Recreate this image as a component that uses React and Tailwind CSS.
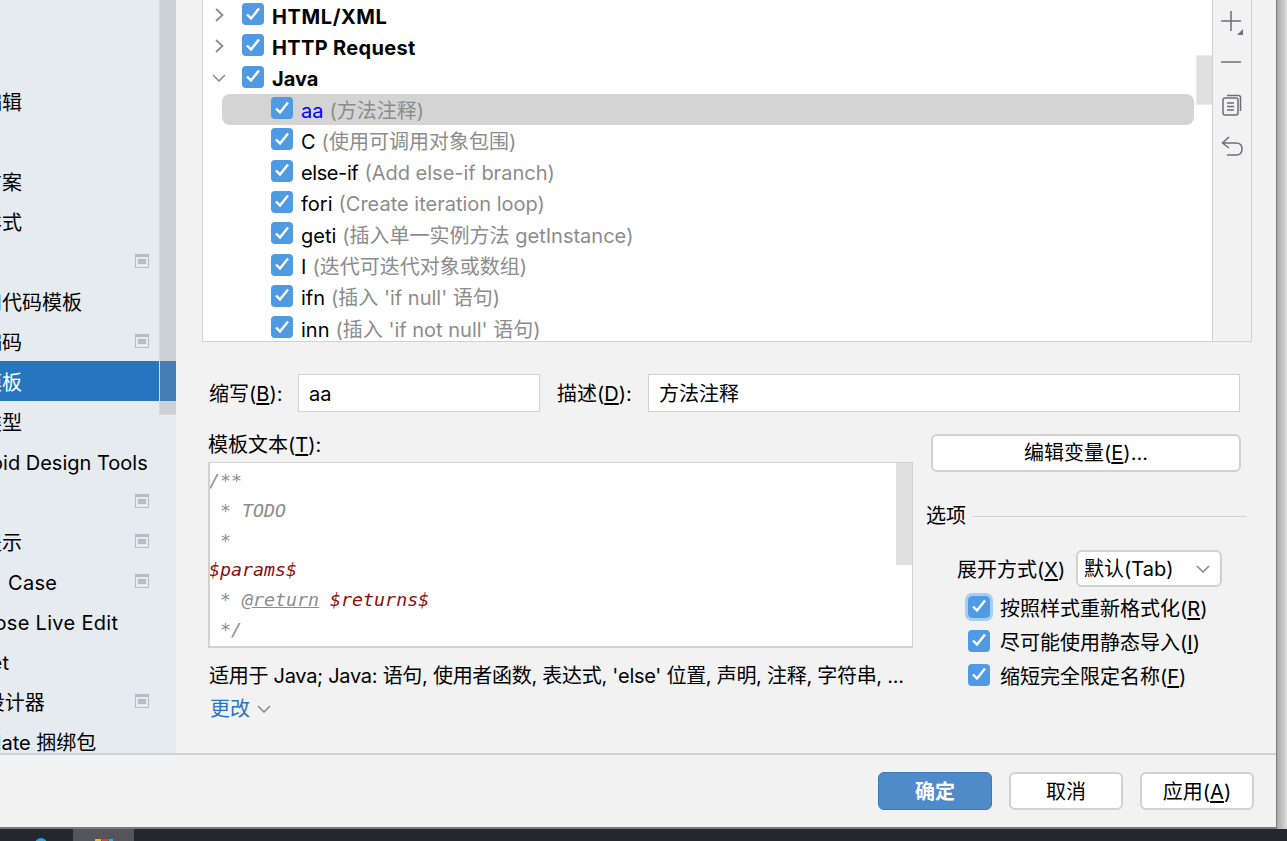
const sans = 'font-["Inter","Noto_Sans_CJK_SC",sans-serif]';

const navRows = [
  { text: '' },
  { text: '' },
  { text: '代码编辑', shift: 'ml-[-58px]' },
  { text: '' },
  { text: '配色方案', shift: 'ml-[-58px]' },
  { text: '代码样式', shift: 'ml-[-58px]' },
  { text: '', icon: true },
  { text: '文件和代码模板', shift: 'ml-[-58px]' },
  { text: '文件编码', shift: 'ml-[-58px]', icon: true },
  { text: '实时模板', shift: 'ml-[-58px]', active: true },
  { text: '文件类型', shift: 'ml-[-58px]' },
  { text: 'Android Design Tools', shift: 'ml-[-54px]' },
  { text: '', icon: true },
  { text: '嵌入提示', shift: 'ml-[-58px]', icon: true },
  { text: 'Case', shift: 'ml-[8px] tracking-[0.3px]', icon: true },
  { text: 'Compose Live Edit', shift: 'ml-[-63px] tracking-[0.3px]' },
  { text: 'Snippet', shift: 'ml-[-65px] tracking-[0.3px]' },
  { text: 'GUI 设计器', shift: 'ml-[-56px]', icon: true },
  { text: 'TextMate 捆绑包', shift: 'ml-[-57px]' },
];

const groups = [
  { name: 'HTML/XML', open: false, spacing: 'tracking-[0.6px]' },
  { name: 'HTTP Request', open: false, spacing: 'tracking-[0.33px]' },
  { name: 'Java', open: true, spacing: '' },
];

const templates = [
  { name: 'aa', note: '(方法注释)', selected: true },
  { name: 'C', note: '(使用可调用对象包围)' },
  { name: 'else-if', note: '(Add else-if branch)', spacing: 'tracking-[-0.4px]' },
  { name: 'fori', note: '(Create iteration loop)' },
  { name: 'geti', note: '(插入单一实例方法 getInstance)' },
  { name: 'I', note: '(迭代可迭代对象或数组)' },
  { name: 'ifn', note: "(插入 'if null' 语句)" },
  { name: 'inn', note: "(插入 'if not null' 语句)" },
];

function Check({ focused }) {
  return (
    <span
      className={`-mt-[3px] flex h-[22px] w-[22px] shrink-0 items-center justify-center rounded-[4px] bg-[#4f9ae3] ${
        focused ? 'outline-[3px] outline-[#a6cdf2]' : ''
      }`}
    >
      <svg width="16" height="16" viewBox="0 0 16 16" fill="none" className="-mt-px">
        <path d="M2 8.5 L6 12.5 L14 2.5" stroke="#fff" strokeWidth="2.4" />
      </svg>
    </span>
  );
}

function Chevron({ down, className }) {
  return down ? (
    <svg width="14" height="8" viewBox="0 0 14 8" fill="none" className={className}>
      <path d="M1 1 L7 7 L13 1" stroke="#8c8c8c" strokeWidth="1.6" />
    </svg>
  ) : (
    <svg width="9" height="14" viewBox="0 0 9 14" fill="none" className={className}>
      <path d="M1 1 L7.5 7 L1 13" stroke="#8c8c8c" strokeWidth="1.8" />
    </svg>
  );
}

function NavIcon() {
  return (
    <svg width="14" height="14" viewBox="0 0 14 14" className="absolute left-[135px]">
      <rect x="0.5" y="0.5" width="13" height="13" fill="#e6ebf0" stroke="#b4bcc4" />
      <rect x="0" y="0" width="14" height="3" fill="#b4bcc4" />
      <rect x="3" y="5" width="8" height="5" fill="#b4bcc4" />
    </svg>
  );
}

function Sidebar() {
  return (
    <div className="relative h-full w-[176px] shrink-0 overflow-hidden bg-[#e6ebf0] pt-px text-[20px] text-black">
      {navRows.map((row, i) => (
        <div
          key={i}
          className={`relative flex h-10 items-center whitespace-nowrap ${
            row.active ? 'bg-[#2675bf] text-white' : ''
          }`}
        >
          <span className={`pt-1 ${row.shift}`}>{row.text}</span>
          {row.icon && <NavIcon />}
        </div>
      ))}
      <div className="absolute right-0 top-0 h-[415px] w-[17px] border-b border-l border-[#d5dade] bg-[#8f969e]/30" />
    </div>
  );
}

function TemplateList() {
  return (
    <div className="flex h-[342px] border-x border-b border-[#d1d1d1]">
      <div className="relative flex-1 overflow-hidden bg-white text-[20px] leading-none">
        {groups.map((g) => (
          <div key={g.name} className="flex h-[31.3px] items-center">
            <span className="-mt-px flex w-[39px] justify-center pr-[7px]">
              <Chevron down={g.open} />
            </span>
            <Check />
            <span className={`ml-2 pt-0.5 font-bold text-black ${g.spacing}`}>{g.name}</span>
          </div>
        ))}
        {templates.map((t) => (
          <div
            key={t.name}
            className={`ml-[19px] mr-[18px] flex h-[31.3px] items-center rounded-lg pl-[49px] ${
              t.selected ? 'bg-[#d4d4d4]' : ''
            }`}
          >
            <Check />
            <span className={`ml-2 pt-0.5 ${t.selected ? 'text-[#0000ff]' : 'text-black'} ${t.spacing || ''}`}>{t.name}</span>
            <span className="ml-[6px] pt-0.5 text-[#8c8c8c]">{t.note}</span>
          </div>
        ))}
        <div className="absolute right-0 top-[55px] h-[50px] w-4 border-y border-l border-[#eaeaea] bg-[#e0e0e0]" />
      </div>
      <div className="flex w-[39px] shrink-0 flex-col items-center border-l border-[#d1d1d1] bg-[#f2f2f2] pt-[10px] text-[#6e6e7a]">
        <svg width="24" height="26" viewBox="0 0 24 26" fill="none" stroke="currentColor" strokeWidth="1.5">
          <path d="M11 1 V21 M1 11 H21" />
          <path d="M17 25 L23 25 L23 19 Z" fill="currentColor" stroke="none" />
        </svg>
        <svg width="22" height="2" viewBox="0 0 22 2" className="-ml-0.5 mt-[25px]" stroke="currentColor" strokeWidth="1.5">
          <path d="M1 1 H21" />
        </svg>
        <svg width="20" height="22" viewBox="0 0 20 22" fill="none" stroke="currentColor" strokeWidth="1.5" className="mt-[31px]">
          <path d="M5 1.5 H16.5 Q18.5 1.5 18.5 3.5 V17" />
          <rect x="1" y="4" width="15" height="17" rx="2" />
          <path d="M5 9 H12 M5 12.5 H12 M5 16 H12" />
        </svg>
        <svg width="22" height="22" viewBox="0 0 22 22" fill="none" stroke="currentColor" strokeWidth="1.5" className="mt-[19px]">
          <path d="M8 2 L1.5 8 L8 13 M1.5 8 H15 Q21 8 21 14 Q21 20 15 20 H6" />
        </svg>
      </div>
    </div>
  );
}

function Key({ children }) {
  return <span className="underline underline-offset-2">{children}</span>;
}

function FieldRow() {
  return (
    <div className="mt-[32px] flex h-[38px] items-center text-[20px] text-black">
      <span className="ml-[7px] w-[89px] shrink-0 pt-0.5">缩写(<Key>B</Key>):</span>
      <div className="flex h-full w-[242px] items-center border border-[#d1d1d1] bg-white pl-[10px] pt-0.5">aa</div>
      <span className="ml-[17px] w-[91px] shrink-0 pt-0.5">描述(<Key>D</Key>):</span>
      <div className="flex h-full w-[592px] items-center border border-[#d1d1d1] bg-white pl-[10px] pt-0.5">方法注释</div>
    </div>
  );
}

function Editor() {
  const comment = 'text-[#8c8c8c]';
  const variable = 'text-[#8c0a0a]';
  return (
    <div className="relative mt-[4px] h-[186px] w-[705px] overflow-hidden border-2 border-r border-t border-[#d1d1d1] bg-white font-['DejaVu_Sans_Mono',monospace] text-[18.3px] italic leading-[29.8px]">
      <div className="-ml-px pt-[3px]">
        <div className={comment}>/**</div>
        <div className={comment}>&nbsp;* TODO</div>
        <div className={comment}>&nbsp;*</div>
        <div className={variable}>$params$</div>
        <div>
          <span className={comment}>&nbsp;* <span className="underline">@return</span> </span>
          <span className={variable}>$returns$</span>
        </div>
        <div className={comment}>&nbsp;*/</div>
      </div>
      <div className="absolute right-0 top-0 h-[102px] w-4 bg-[#e0e0e0]" />
    </div>
  );
}

function OptionRow({ label, k, focused }) {
  return (
    <div className="flex h-[34px] items-center">
      <Check focused={focused} />
      <span className="ml-[10px] pt-0.5">{label}(<Key>{k}</Key>)</span>
    </div>
  );
}

function Options() {
  return (
    <div className="ml-[12px] w-[321px] pt-[2px] text-[20px] text-black">
      <div className="ml-[6px] flex h-[38px] w-[310px] items-center justify-center rounded-md border-2 border-[#d1d1d1] bg-white">
        编辑变量(<Key>E</Key>)...
      </div>
      <div className="ml-px mt-[29px] flex items-center gap-[7px] pt-px leading-7">
        <span>选项</span>
        <span className="h-px flex-1 bg-[#d1d1d1]" />
      </div>
      <div className="ml-[32px] mt-[20px] flex h-[37px] items-center">
        <span className="w-[119px] shrink-0 pt-0.5">展开方式(<Key>X</Key>)</span>
        <div className="flex h-full w-[146px] items-center justify-between rounded-md border-2 border-[#d1d1d1] bg-white pl-[6px] pr-[10px] pt-px">
          默认(Tab)
          <Chevron down />
        </div>
      </div>
      <div className="ml-[43px] mt-[4px]">
        <OptionRow label="按照样式重新格式化" k="R" focused />
        <OptionRow label="尽可能使用静态导入" k="I" />
        <OptionRow label="缩短完全限定名称" k="F" />
      </div>
    </div>
  );
}

function Footer() {
  const plain = 'flex h-[38px] w-[114px] items-center justify-center rounded-md border-2 border-[#d1d1d1] bg-white pt-0.5 text-black';
  return (
    <div className="flex h-[74px] items-center justify-end gap-[17px] border-t-2 border-[#d1d1d1] bg-[#f2f2f2] pr-[22px] text-[20px]">
      <button className="flex h-[38px] w-[114px] items-center justify-center rounded-md border border-[#3f78b5] bg-[#4f8ac9] pt-0.5 font-bold text-white">
        确定
      </button>
      <button className={plain}>取消</button>
      <button className={plain}>
        应用(<Key>A</Key>)
      </button>
    </div>
  );
}

function Taskbar() {
  return (
    <div className="flex h-[12px] overflow-hidden">
      <div className="ml-[35px] mt-[9px] h-3 w-3 rounded-full bg-[#2ea3dc]" />
      <div className="ml-[26px] flex h-full w-[61px] justify-center gap-px bg-[#54545c] pt-[10px]">
        <span className="h-2 w-[6px] bg-[#f3b51d]" />
        <span className="h-2 w-[6px] bg-[#e2402f]" />
        <span className="h-2 w-[4px] bg-[#27b5d8]" />
      </div>
    </div>
  );
}

export default function App() {
  return (
    <div className={`flex h-[841px] w-[1287px] flex-col overflow-hidden bg-[#26262e] ${sans}`}>
      <div className="flex h-[829px] shrink-0">
        <div className="flex w-[1277px] flex-col border-b-2 border-r border-[#7a7a7a] bg-[#f2f2f2]">
          <div className="flex h-[753px]">
            <Sidebar />
            <div className="flex-1 pl-[26px] pr-[24px]">
              <TemplateList />
              <FieldRow />
              <div className="ml-[6px] mt-[20px] flex">
                <div>
                  <div className="text-[20px] leading-[26px] text-black">模板文本(<Key>T</Key>):</div>
                  <Editor />
                  <div className="ml-px mt-[14px] w-[704px] truncate whitespace-nowrap text-[20px] leading-7 tracking-[-0.28px] text-black">
                    适用于 Java; Java: 语句, 使用者函数, 表达式, 'else' 位置, 声明, 注释, 字符串, ...
                  </div>
                  <div className="ml-[2px] mt-[4px] flex items-center gap-[7px] text-[20px] text-[#2675bf]">
                    更改 <Chevron down />
                  </div>
                </div>
                <Options />
              </div>
            </div>
          </div>
          <Footer />
        </div>
        <div className="flex-1 bg-gradient-to-r from-[#a8a8a8] to-[#dcdcdc]" />
      </div>
      <Taskbar />
    </div>
  );
}
